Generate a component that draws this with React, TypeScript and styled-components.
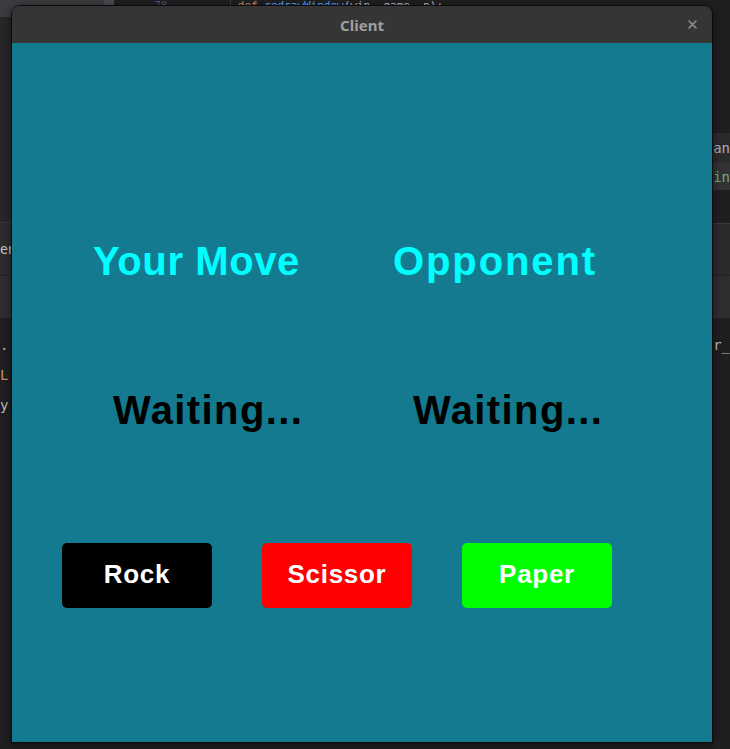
import styled, { createGlobalStyle } from "styled-components";

const GlobalStyle = createGlobalStyle`
  html, body {
    margin: 0;
    padding: 0;
    background: #1f1f22;
  }
  body {
    font-family: "Liberation Sans", Arial, sans-serif;
  }
`;

const Desktop = styled.div`
  position: relative;
  width: 730px;
  height: 749px;
  overflow: hidden;
  background: #1f1f22;
`;

/* editor behind the game window */
const Backdrop = styled.div`
  display: flex;
  height: 100%;
  font-family: "DejaVu Sans Mono", monospace;
  font-size: 14px;
`;

const SidePane = styled.div`
  width: 105px;
  display: flex;
  flex-direction: column;
`;

const ScrollTrack = styled.div`
  width: 10px;
  background: #1f1f22;
`;

const ScrollThumb = styled.div`
  height: 15px;
  background: #4a4a4f;
`;

const Editor = styled.div`
  flex: 1;
  display: flex;
  flex-direction: column;
`;

const Band = styled.div<{ $h?: number; $bg: string; $line?: string; $indent?: number; $fill?: boolean }>`
  height: ${(p) => (p.$h ? `${p.$h}px` : "auto")};
  flex: ${(p) => (p.$fill ? 1 : "none")};
  background: ${(p) => p.$bg};
  border-top: ${(p) => (p.$line ? `1px solid ${p.$line}` : "none")};
  box-sizing: border-box;
  padding-left: ${(p) => p.$indent ?? 0}px;
  display: flex;
  flex-direction: column;
  justify-content: ${(p) => (p.$fill ? "flex-start" : "center")};
  white-space: nowrap;
  overflow: hidden;
`;

const Snip = styled.span<{ $color: string; $sans?: boolean }>`
  color: ${(p) => p.$color};
  font-family: ${(p) => (p.$sans ? '"Noto Sans", sans-serif' : '"DejaVu Sans Mono", monospace')};
  font-size: 14px;
  line-height: 30px;
`;

const CodeLines = styled.div`
  padding-top: 12px;
  display: flex;
  flex-direction: column;
`;

const CodeRow = styled.div`
  display: flex;
  height: 11px;
  flex: none;
  align-items: flex-end;
  line-height: 11px;
  font-size: 11px;
`;

const Gutter = styled.span`
  width: 117px;
  box-sizing: border-box;
  padding-left: 40px;
  color: #4b5a78;
  border-right: 1px solid #3a3a3e;
  height: 100%;
  display: flex;
  align-items: flex-end;
`;

const Tok = styled.span<{ $color: string }>`
  color: ${(p) => p.$color};
`;

/* the pygame client window */
const Window = styled.div`
  position: absolute;
  left: 11px;
  top: 5px;
  width: 702px;
  height: 738px;
  box-sizing: border-box;
  border: 1px solid #0b0b0c;
  border-radius: 9px 9px 0 0;
  overflow: hidden;
  display: flex;
  flex-direction: column;
  box-shadow: 0 2px 10px rgba(0, 0, 0, 0.5);
`;

const TitleBar = styled.div`
  height: 37px;
  flex: none;
  background: #353535;
  display: grid;
  grid-template-columns: 1fr auto 1fr;
  align-items: center;
`;

const Title = styled.span`
  grid-column: 2;
  color: #9f9f9f;
  font-family: "Noto Sans", sans-serif;
  font-size: 15px;
  font-weight: 700;
`;

const CloseButton = styled.button`
  grid-column: 3;
  justify-self: end;
  margin-right: 14px;
  width: 12px;
  height: 12px;
  padding: 0;
  border: none;
  background: none;
  display: flex;
  align-items: center;
  justify-content: center;
`;

const Canvas = styled.div`
  flex: 1;
  background: #137a8f;
  padding-top: 195px;
  display: flex;
  flex-direction: column;
`;

const MoveGrid = styled.div`
  display: grid;
  grid-template-columns: 300px 300px;
  padding-left: 81px;
  row-gap: 103px;
`;

const Label = styled.div<{ $color: string; $indent?: number; $spacing?: number }>`
  color: ${(p) => p.$color};
  font-size: 40px;
  line-height: 46px;
  font-weight: 700;
  padding-left: ${(p) => p.$indent ?? 0}px;
  letter-spacing: ${(p) => p.$spacing ?? 0}px;
  white-space: nowrap;
`;

const ButtonRow = styled.div`
  display: flex;
  gap: 50px;
  padding-left: 50px;
  margin-top: 110px;
`;

const MoveButton = styled.button<{ $bg: string }>`
  width: 150px;
  height: 65px;
  border: none;
  border-radius: 5px;
  background: ${(p) => p.$bg};
  color: #ffffff;
  font-family: "Liberation Sans", Arial, sans-serif;
  font-size: 26px;
  font-weight: 700;
  letter-spacing: 0.7px;
  padding: 0 0 2px;
  cursor: pointer;
`;

const moves = [
  { name: "Rock", color: "#000000" },
  { name: "Scissor", color: "#ff0000" },
  { name: "Paper", color: "#00ff00" },
];

const App = () => {
  return (
    <>
      <GlobalStyle />
      <Desktop>
        <Backdrop>
          <SidePane>
            <Band $h={17} $bg="#3c3c40" />
            <Band $h={205} $bg="#27272a" />
            <Band $h={53} $bg="#2c2c2f" $line="#3a3a3d">
              <Snip $color="#c9c9c9" $sans>
                er
              </Snip>
            </Band>
            <Band $h={43} $bg="#2f2f32" $line="#232326" />
            <Band $bg="#1f1f22" $fill>
              <CodeLines>
                <Snip $color="#bcbec4">.</Snip>
                <Snip $color="#cf8e6d">L</Snip>
                <Snip $color="#bcbec4">y</Snip>
              </CodeLines>
            </Band>
          </SidePane>
          <ScrollTrack>
            <ScrollThumb />
          </ScrollTrack>
          <Editor>
            <CodeRow>
              <Gutter>78</Gutter>
              <Tok $color="#cf8e6d">&nbsp;def&nbsp;</Tok>
              <Tok $color="#56a8f5">redrawWindow</Tok>
              <Tok $color="#bcbec4">(win, game, p):</Tok>
            </CodeRow>
            <Band $h={122} $bg="#1f1f22" />
            <Band $h={30} $bg="#2b2b2e" $indent={599}>
              <Snip $color="#a9abb0">an</Snip>
            </Band>
            <Band $h={27} $bg="#333336" $indent={599}>
              <Snip $color="#6aab73">in</Snip>
            </Band>
            <Band $h={33} $bg="#1f1f22" />
            <Band $h={52} $bg="#2b2b2e" $line="#3a3a3d" />
            <Band $h={43} $bg="#2e2e31" $line="#232326" />
            <Band $bg="#1f1f22" $fill $indent={599}>
              <CodeLines>
                <Snip $color="#bcbec4">r_</Snip>
              </CodeLines>
            </Band>
          </Editor>
        </Backdrop>

        <Window>
          <TitleBar>
            <Title>Client</Title>
            <CloseButton aria-label="Close">
              <svg width="9" height="9" viewBox="0 0 9 9">
                <path d="M1 1 L8 8 M8 1 L1 8" stroke="#8e8e8e" strokeWidth="1.6" strokeLinecap="round" />
              </svg>
            </CloseButton>
          </TitleBar>
          <Canvas>
            <MoveGrid>
              <Label $color="#00ffff" $spacing={0.6}>
                Your Move
              </Label>
              <Label $color="#00ffff" $spacing={1.9}>
                Opponent
              </Label>
              <Label $color="#000000" $indent={20} $spacing={1.4}>
                Waiting...
              </Label>
              <Label $color="#000000" $indent={20} $spacing={1.4}>
                Waiting...
              </Label>
            </MoveGrid>
            <ButtonRow>
              {moves.map((m) => (
                <MoveButton key={m.name} $bg={m.color}>
                  {m.name}
                </MoveButton>
              ))}
            </ButtonRow>
          </Canvas>
        </Window>
      </Desktop>
    </>
  );
};

export default App;
